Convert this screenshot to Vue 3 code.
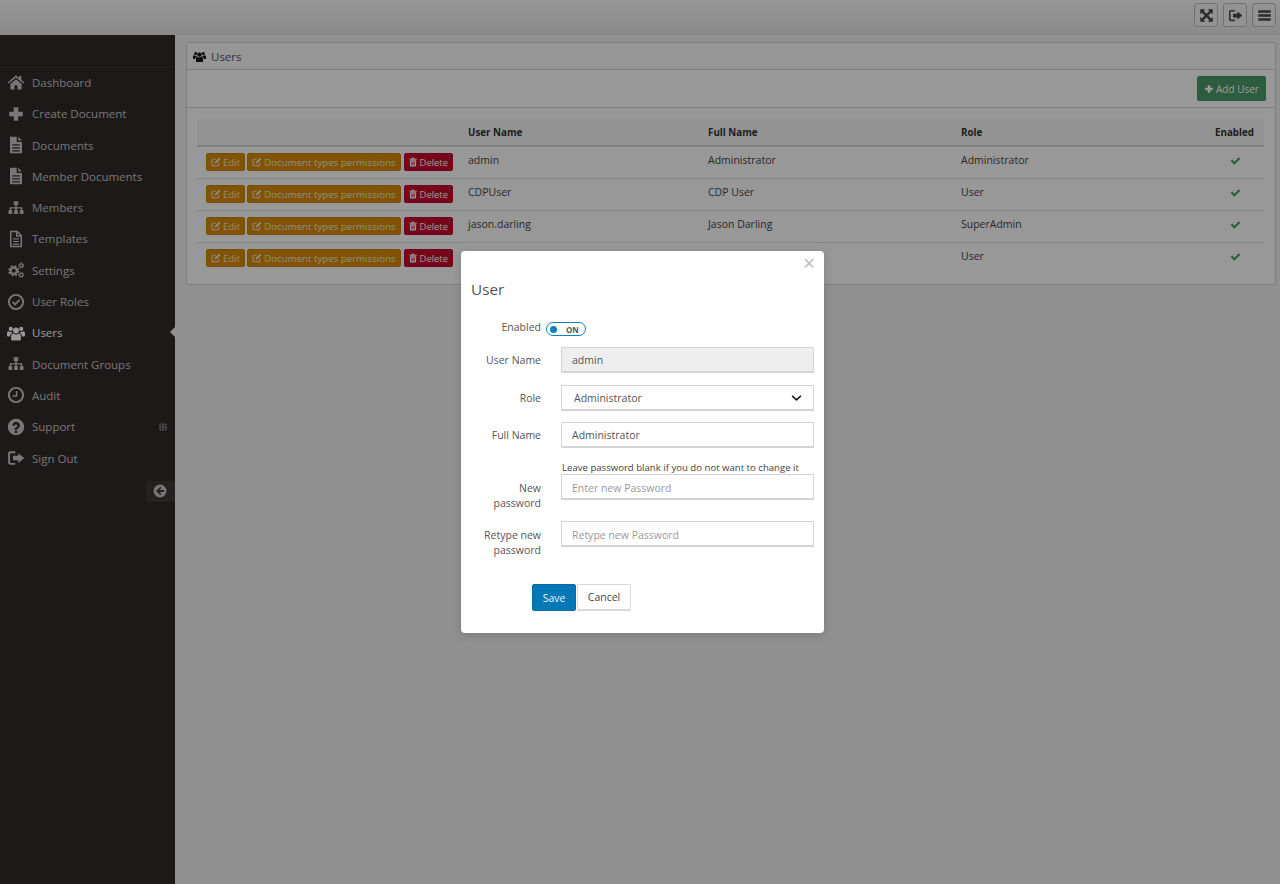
<script setup>
const nav = [
  { label: 'Dashboard', icon: 'home' },
  { label: 'Create Document', icon: 'plus' },
  { label: 'Documents', icon: 'file' },
  { label: 'Member Documents', icon: 'file' },
  { label: 'Members', icon: 'sitemap' },
  { label: 'Templates', icon: 'fileo' },
  { label: 'Settings', icon: 'cogs' },
  { label: 'User Roles', icon: 'checkc' },
  { label: 'Users', icon: 'users', active: true },
  { label: 'Document Groups', icon: 'sitemap' },
  { label: 'Audit', icon: 'clock' },
  { label: 'Support', icon: 'help', more: true },
  { label: 'Sign Out', icon: 'signout' }
]
const users = [
  { name: 'admin', full: 'Administrator', role: 'Administrator' },
  { name: 'CDPUser', full: 'CDP User', role: 'User' },
  { name: 'jason.darling', full: 'Jason Darling', role: 'SuperAdmin' },
  { name: '', full: '', role: 'User' }
]
</script>

<template>
  <div class="page">
    <svg class="defs" aria-hidden="true">
      <defs>
        <symbol id="home" viewBox="0 0 24 24"><path d="M12 3 1 12.5l1.3 1.5L12 6l9.700 8 1.300-1.500-4-3.400V4h-3v2.600zM4.500 14.500V22H10v-5.500h4V22h5.500v-7.500L12 8.300z"/></symbol>
        <symbol id="plus" viewBox="0 0 24 24"><path d="M9 3h6v6h6v6h-6v6H9v-6H3V9h6z"/></symbol>
        <symbol id="file" viewBox="0 0 24 24"><path fill-rule="evenodd" d="M4 1h9v7h7v15H4zM15 1l5 5h-5zM7 11v1.500h10V11zm0 4v1.500h10V15zm0 4v1.500h10V19z"/></symbol>
        <symbol id="fileo" viewBox="0 0 24 24"><path fill-rule="evenodd" d="M4 1h10l6 6v16H4zm2 2v18h12V9h-6V3zm8 .5V7h3.500zM8 11v1.500h8V11zm0 3.500V16h8v-1.500zM8 18v1.500h8V18z"/></symbol>
        <symbol id="sitemap" viewBox="0 0 24 24"><path d="M9 3h6v5h-2v3h7.500v4H22v5h-5v-5h1.500v-2.500H13V15h1.500v5h-5v-5H11v-2.500H5.500V15H7v5H2v-5h1.500v-4H11V8H9z"/></symbol>
        <symbol id="cogs" viewBox="0 0 24 24"><g fill="none" stroke="currentColor"><circle cx="9" cy="13" r="4.200" stroke-width="3"/><circle cx="9" cy="13" r="6.300" stroke-width="2.400" stroke-dasharray="2.800 2.150"/><circle cx="19" cy="6" r="2.200" stroke-width="1.500"/><circle cx="19" cy="6" r="3.400" stroke-width="1.300" stroke-dasharray="1.500 1.170"/><circle cx="19" cy="18.500" r="2.200" stroke-width="1.500"/><circle cx="19" cy="18.500" r="3.400" stroke-width="1.300" stroke-dasharray="1.500 1.170"/></g></symbol>
        <symbol id="checkc" viewBox="0 0 24 24"><circle cx="12" cy="12" r="9.500" fill="none" stroke="currentColor" stroke-width="2.600"/><path d="m7.500 12 3.300 3.300 6-6" fill="none" stroke="currentColor" stroke-width="2.400"/></symbol>
        <symbol id="users" viewBox="0 0 24 24"><circle cx="12" cy="8.500" r="4"/><circle cx="5" cy="6.500" r="2.800"/><circle cx="19" cy="6.500" r="2.800"/><path d="M5.500 21v-4.500c0-3 2-4 3-4 1 .9 2.200 1.400 3.500 1.400s2.500-.5 3.500-1.400c1 0 3 1 3 4V21c0 .6-.5 1-1 1H6.500c-.5 0-1-.4-1-1zM0 15v-3c0-1.500 1-2.500 2.500-2.500.7.600 1.500 1 2.500 1h1.200C6.500 11 7 11.700 7.300 12c-2 .8-3.100 2.500-3.300 4.500H1c-.6 0-1-.7-1-1.500zm24 0v-3c0-1.500-1-2.500-2.500-2.500-.7.600-1.500 1-2.500 1h-1.200c-.3.500-.8 1.200-1.100 1.500 2 .8 3.100 2.500 3.300 4.500h3c.6 0 1-.7 1-1.500z"/></symbol>
        <symbol id="clock" viewBox="0 0 24 24"><circle cx="12" cy="12" r="9.500" fill="none" stroke="currentColor" stroke-width="2.600"/><path d="M12.800 6.500v6.800H7.500" fill="none" stroke="currentColor" stroke-width="2"/></symbol>
        <symbol id="help" viewBox="0 0 24 24"><path fill-rule="evenodd" d="M12 1a11 11 0 1 1 0 22 11 11 0 0 1 0-22zM10.400 17v3h3.200v-3zM7 9.500l2.500 1.400c.4-1.200 1.300-2.100 2.500-2.100 1.100 0 1.900.6 1.900 1.400 0 1-.9 1.400-1.800 2-1.100.7-2.100 1.500-2.100 3.200v.6h3.200c0-1.100.6-1.400 1.500-1.900 1.300-.8 2.500-1.800 2.500-4C17.200 7 14.800 5 12 5 9.700 5 8 7 7 9.500z"/></symbol>
        <symbol id="signout" viewBox="0 0 24 24"><path d="M11 3v2.500H5c-.6 0-1 .4-1 1v11c0 .6.400 1 1 1h6V21H4.500C2.600 21 1.500 19.700 1.500 18V6c0-1.700 1.100-3 3-3zM15 5.500l8 6.500-8 6.500V15H8V9h7z"/></symbol>
        <symbol id="back" viewBox="0 0 24 24"><path fill-rule="evenodd" d="M12 1a11 11 0 1 1 0 22 11 11 0 0 1 0-22zm.5 3.800L5.300 12l7.200 7.200 2-2-3.600-3.600H19v-3.200h-8.100l3.600-3.600z"/></symbol>
        <symbol id="expand" viewBox="0 0 24 24"><path d="M2 2h8L7.400 4.600 12 9.200l4.600-4.600L14 2h8v8l-2.600-2.600L14.800 12l4.600 4.600L22 14v8h-8l2.600-2.600L12 14.800l-4.600 4.600L10 22H2v-8l2.600 2.600L9.200 12 4.600 7.400 2 10z"/></symbol>
        <symbol id="bars" viewBox="0 0 24 24"><path d="M2 3.500h20v4H2zm0 6.500h20v4H2zm0 6.500h20v4H2z"/></symbol>
        <symbol id="edit" viewBox="0 0 24 24"><path d="M4.500 4H13l-2.200 2.200H4.800c-.6 0-1 .4-1 1v11.500c0 .6.400 1 1 1h11.500c.6 0 1-.4 1-1v-4.500l2.200-2.200v7c0 1.900-1.300 3-3 3H4.500c-1.700 0-3-1.100-3-3V7c0-1.700 1.300-3 3-3zM19 1.800l3.300 3.300L13 14.400l-4.300 1 1-4.300z"/></symbol>
        <symbol id="trash" viewBox="0 0 24 24"><path fill-rule="evenodd" d="M9 1.500h6l1.200 2.500H21v2.500H3V4h4.800zM4.500 8h15v12.500c0 1.200-.8 2-2 2h-11c-1.200 0-2-.8-2-2zm3.500 2.500v9.500h1.800v-9.500zm3.100 0v9.500h1.800v-9.500zm3.100 0v9.500H16v-9.500z"/></symbol>
        <symbol id="check" viewBox="0 0 24 24"><path d="m1.500 13 3.300-3.300 4.800 4.800L19.200 5l3.300 3.300L9.600 21z"/></symbol>
        <symbol id="plussq" viewBox="0 0 24 24"><path fill-rule="evenodd" d="M4 2h16c1.200 0 2 .8 2 2v16c0 1.200-.8 2-2 2H4c-1.200 0-2-.8-2-2V4c0-1.200.8-2 2-2zm0 2v7h7V4zm9 0v7h7V4zM4 13v7h7v-7zm9 0v7h7v-7z"/></symbol>
      </defs>
    </svg>

    <header class="topbar">
      <button class="tool"><svg class="tool-ic"><use href="#expand" /></svg></button>
      <button class="tool"><svg class="tool-ic"><use href="#signout" /></svg></button>
      <button class="tool"><svg class="tool-ic"><use href="#bars" /></svg></button>
    </header>

    <div class="body">
      <aside class="sidebar">
        <div class="brand"></div>
        <nav class="nav">
          <a v-for="item in nav" :key="item.label" class="nav-item" :class="{ active: item.active }">
            <svg class="nav-ic"><use :href="'#' + item.icon" /></svg>
            <span class="nav-label">{{ item.label }}</span>
            <svg v-if="item.more" class="more-ic"><use href="#plussq" /></svg>
          </a>
        </nav>
        <div class="collapse-row">
          <button class="collapse"><svg class="collapse-ic"><use href="#back" /></svg></button>
        </div>
      </aside>

      <main class="main">
        <section class="panel">
          <div class="panel-head">
            <svg class="head-ic"><use href="#users" /></svg>
            <span>Users</span>
          </div>
          <div class="panel-tools">
            <button class="btn-add"><svg class="add-ic"><use href="#plus" /></svg>Add User</button>
          </div>
          <div class="panel-body">
            <table class="grid">
              <colgroup>
                <col class="c1" /><col class="c2" /><col class="c3" /><col class="c4" /><col class="c5" />
              </colgroup>
              <thead>
                <tr><th></th><th>User Name</th><th>Full Name</th><th>Role</th><th class="th-en">Enabled</th></tr>
              </thead>
              <tbody>
                <tr v-for="(u, i) in users" :key="i">
                  <td class="actions">
                    <div class="action-row">
                      <button class="btn amber"><svg class="btn-ic"><use href="#edit" /></svg>Edit</button>
                      <button class="btn amber"><svg class="btn-ic"><use href="#edit" /></svg>Document types permissions</button>
                      <button class="btn red"><svg class="btn-ic"><use href="#trash" /></svg>Delete</button>
                    </div>
                  </td>
                  <td>{{ u.name }}</td>
                  <td>{{ u.full }}</td>
                  <td>{{ u.role }}</td>
                  <td class="td-en"><svg class="check-ic"><use href="#check" /></svg></td>
                </tr>
              </tbody>
            </table>
          </div>
        </section>
      </main>
    </div>

    <div class="backdrop"></div>

    <div class="modal">
      <span class="close">×</span>
      <h4 class="modal-title">User</h4>
      <div class="row row-enabled">
        <label class="lbl">Enabled</label>
        <span class="toggle"><i class="dot"></i><b class="on">ON</b></span>
      </div>
      <div class="row row-user">
        <label class="lbl">User Name</label>
        <input class="field disabled" value="admin" disabled />
      </div>
      <div class="row row-role">
        <label class="lbl">Role</label>
        <div class="field select">
          <span>Administrator</span>
          <svg class="chev" viewBox="0 0 12 8"><path d="M1.200 1.500 6 6l4.800-4.500" fill="none" stroke="#111" stroke-width="1.700" /></svg>
        </div>
      </div>
      <div class="row row-full">
        <label class="lbl">Full Name</label>
        <input class="field" value="Administrator" />
      </div>
      <div class="row row-new">
        <label class="lbl lbl-two">New password</label>
        <div class="col">
          <div class="hint">Leave password blank if you do not want to change it</div>
          <input class="field pw" placeholder="Enter new Password" />
        </div>
      </div>
      <div class="row row-retype">
        <label class="lbl lbl-two">Retype new password</label>
        <input class="field pw" placeholder="Retype new Password" />
      </div>
      <div class="footer">
        <button class="save">Save</button>
        <button class="cancel">Cancel</button>
      </div>
    </div>
  </div>
</template>

<style>
html, body { margin: 0; padding: 0; background: #f0f0f0; }
</style>

<style scoped>
* { box-sizing: border-box; }
.page {
  position: relative;
  width: 1280px;
  height: 884px;
  overflow: hidden;
  display: flex;
  flex-direction: column;
  background: #f0f0f0;
  font-family: "Open Sans", "Liberation Sans", sans-serif;
  font-size: 10.500px;
  color: #444;
}
.defs { position: absolute; width: 0; height: 0; }
svg { fill: currentColor; display: block; }
button { font-family: inherit; cursor: pointer; }

.topbar {
  height: 35px;
  flex: none;
  display: flex;
  justify-content: flex-end;
  align-items: flex-start;
  gap: 5px;
  padding: 3px 4px 0 0;
  background: linear-gradient(#fbfbfb, #e6e6e6);
}
.tool {
  width: 24px;
  height: 24px;
  padding: 0;
  display: flex;
  align-items: center;
  justify-content: center;
  background: #f6f6f6;
  border: 1px solid #bdbdbd;
  border-radius: 3px;
  color: #484848;
}
.tool-ic { width: 15px; height: 15px; }

.body { flex: 1; display: flex; min-height: 0; }
.sidebar {
  width: 175px;
  flex: none;
  background: #312b2b;
  border-top: 1px solid #2a2525;
}
.brand { height: 30.800px; border-bottom: 1px solid #3d3737; box-shadow: 0 -1px 0 #1e1a1a inset; }
.nav { display: flex; flex-direction: column; }
.nav-item {
  position: relative;
  height: 31.300px;
  display: flex;
  align-items: center;
  padding-left: 7px;
  color: #c6c6c6;
  font-size: 11.500px;
}
.nav-ic { width: 18px; height: 18px; flex: none; margin-right: 7px; }
.nav-item.active { color: #fff; }
.nav-item.active::after {
  content: "";
  position: absolute;
  right: 0;
  top: 10px;
  border: 5px solid transparent;
  border-right-color: #f0f0f0;
  border-left-width: 0;
}
.more-ic { position: absolute; right: 8px; top: 12px; width: 8px; height: 8px; }
.collapse-row { display: flex; justify-content: flex-end; margin-top: 7px; }
.collapse {
  width: 29px;
  height: 21px;
  padding: 0 0 0 7px;
  background: #3d3737;
  border: 0;
  border-radius: 3px 0 0 3px;
  color: #c6c6c6;
}
.collapse-ic { width: 14px; height: 14px; }

.main { flex: 1; padding: 7px 4px 0 11px; min-width: 0; }
.panel { background: #fdfdfd; border: 1px solid #d2d2d2; border-radius: 2px; }
.panel-head {
  height: 27px;
  display: flex;
  align-items: center;
  gap: 5px;
  padding-left: 6px;
  font-size: 11.500px;
  color: #555;
  background: #fbfbfb;
  border-bottom: 1px solid #d2d2d2;
}
.head-ic { width: 13px; height: 13px; color: #111; }
.panel-tools {
  height: 38px;
  display: flex;
  justify-content: flex-end;
  align-items: center;
  padding-right: 9px;
  border-bottom: 1px solid #d2d2d2;
}
.btn-add {
  height: 25px;
  width: 69px;
  padding: 0;
  display: flex;
  align-items: center;
  justify-content: center;
  gap: 2px;
  color: #fff;
  font-size: 10px;
  background: #4e9a6a;
  border: 1px solid #47905f;
  border-radius: 2px;
}
.add-ic { width: 10px; height: 10px; }
.panel-body { padding: 11px 11px 10px 10px; }
.grid { width: 1067px; table-layout: fixed; border-collapse: collapse; }
.c1 { width: 263px; } .c2 { width: 240px; } .c3 { width: 253px; } .c4 { width: 255px; } .c5 { width: 56px; }
th {
  height: 27px;
  padding: 0 8px;
  text-align: left;
  font-size: 9.800px;
  font-weight: 700;
  color: #333;
  background: #f6f6f6;
  border-bottom: 2px solid #d8d8d8;
}
th.th-en { padding: 0 10px 0 0; text-align: right; }
td {
  height: 32px;
  padding: 0 8px 5px;
  color: #444;
  border-bottom: 1px solid #e0e0e0;
}
tbody tr:last-child td { border-bottom: 0; }
td.actions { padding: 0 0 0 9px; }
.action-row { display: flex; gap: 2px; }
.btn {
  height: 18px;
  padding: 0 4px;
  display: flex;
  align-items: center;
  gap: 1px;
  font-size: 9.700px;
  color: #f3ead6;
  white-space: nowrap;
  border-radius: 2px;
}
.btn-ic { width: 10px; height: 10px; margin-right: 1px; }
.amber { background: #d58c08; border: 1px solid #c58208; }
.red {
  margin-left: 1px;
  padding: 0 4px 0 3px;
  font-size: 9.400px;
  color: #fff;
  background: #c70a2f;
  border: 1px solid #b9092c;
}
td.td-en { padding: 0 0 4px 22px; }
.check-ic { width: 11px; height: 11px; color: #4a9a62; }

.backdrop { position: absolute; inset: 0; background: rgba(0, 0, 0, 0.4); }

.modal {
  position: absolute;
  left: 461px;
  top: 251px;
  width: 363px;
  height: 382px;
  padding: 0 10px;
  background: #fff;
  border-radius: 4px;
  box-shadow: 0 2px 10px rgba(0, 0, 0, 0.15);
  color: #555;
}
.close {
  position: absolute;
  top: 2px;
  right: 9px;
  font-size: 21px;
  line-height: 21px;
  color: #bbb;
}
.modal-title {
  margin: 0;
  padding-top: 27px;
  height: 67px;
  font-size: 15.300px;
  line-height: 22px;
  font-weight: 400;
  color: #555;
}
.row { display: flex; align-items: flex-start; }
.lbl { width: 70px; flex: none; text-align: right; line-height: 14px; font-size: 10.500px; color: #555; }
.lbl-two { line-height: 14.500px; }
.row > .field, .col { width: 253px; margin-left: 20px; flex: none; }
.row-enabled { height: 29px; align-items: flex-start; padding-top: 2px; }
.toggle {
  width: 40px;
  height: 14px;
  margin: 2px 0 0 5px;
  display: flex;
  align-items: center;
  padding: 0 3px;
  border: 1px solid #0d83c4;
  border-radius: 8px;
  background: #fff;
}
.dot { width: 7px; height: 7px; border-radius: 50%; background: #0d7fc0; }
.on { margin-left: 9px; font-size: 8px; font-style: normal; color: #555; }
.field {
  display: block;
  height: 26px;
  padding: 0 10px;
  font-family: inherit;
  font-size: 10.500px;
  color: #555;
  background: #fff;
  border: 1px solid #d4d4d4;
  border-bottom-width: 2px;
  border-radius: 1px;
  outline: 0;
}
.field::placeholder { color: #999; opacity: 1; }
.pw { padding-top: 3px; }
.disabled { background: #eee; }
.row-user { height: 38px; }
.row-user .lbl, .row-role .lbl, .row-full .lbl { line-height: 26px; }
.row-role { height: 37px; }
.row-full { height: 40px; }
.select { display: flex; align-items: center; justify-content: space-between; padding: 0 11px 0 12px; }
.chev { width: 11px; height: 8px; }
.row-new { height: 59px; }
.row-new .lbl { padding-top: 19px; }
.row-new .col .field { width: 253px; }
.hint { height: 13px; margin-top: -1px; padding-left: 1px; font-size: 9.600px; line-height: 14px; color: #444; white-space: nowrap; }
.row-retype { height: 63px; }
.row-retype .lbl { padding-top: 7px; }
.footer { display: flex; gap: 1px; padding-left: 61px; }
.save {
  width: 44px;
  height: 27px;
  padding: 0;
  font-size: 10.500px;
  color: #e8f3fa;
  background: #0678b8;
  border: 1px solid #056ca6;
  border-radius: 2px;
}
.cancel {
  width: 54px;
  height: 27px;
  padding: 0;
  font-size: 10.500px;
  color: #444;
  background: #fff;
  border: 1px solid #d8d8d8;
  border-bottom-width: 2px;
  border-radius: 2px;
}
</style>
